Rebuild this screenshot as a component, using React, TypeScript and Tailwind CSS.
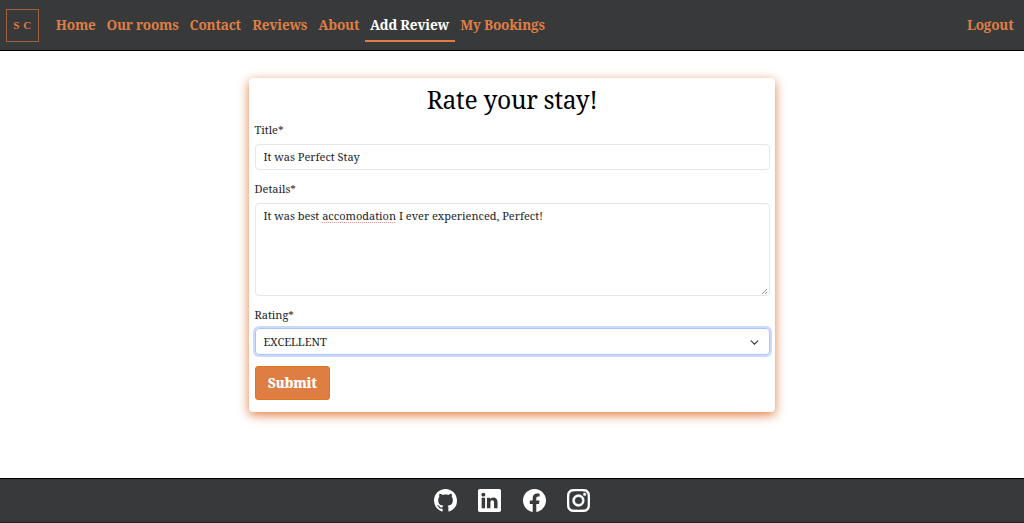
import { BsGithub, BsLinkedin, BsFacebook, BsInstagram } from "react-icons/bs";

const links = [
  { label: "Home", box: "w-[50.5px]" },
  { label: "Our rooms", box: "w-[83px]" },
  { label: "Contact", box: "w-[62.5px]" },
  { label: "Reviews", box: "w-[66.5px]" },
  { label: "About", box: "w-[51.5px]" },
  { label: "Add Review", box: "w-[90px]" },
  { label: "My Bookings", box: "w-[96px]" },
];

export default function App() {
  return (
    <div className="flex h-[523px] flex-col overflow-hidden bg-white font-['Noto_Serif','Droid_Serif','DejaVu_Serif_Condensed','DejaVu_Serif',serif] text-[#212529]">
      <header className="flex h-[51px] shrink-0 items-center border-b border-black bg-[#38393b] pl-[5.5px] pr-[10.5px] text-[13.6px] font-bold tracking-[-0.22px] text-[#df7e43]">
        <div className="flex h-[33px] w-[33px] items-center justify-center border border-[#a15f3a] pl-px pt-px font-['Liberation_Serif',serif] text-[11px] tracking-[0.6px]">
          S C
        </div>
        <nav className="ml-[12px] flex h-full items-center">
          {links.map((l) => (
            <a
              key={l.label}
              className={`flex h-[33px] items-center justify-center whitespace-nowrap border-b-2 pt-[2.5px] ${l.box} ${
                l.label === "Add Review" ? "border-[#df7e43] text-white" : "border-transparent"
              }`}
            >
              {l.label}
            </a>
          ))}
        </nav>
        <a className="ml-auto">Logout</a>
      </header>
      <main className="flex grow justify-center">
        <form className="mt-[27px] flex h-[334px] w-[526px] flex-col rounded-[4px] px-[5.5px] text-[11px] shadow-[0_3px_11px_#df7e43]">
          <h1 className="mt-[5px] h-[34px] text-center text-[24.6px] leading-[34px] tracking-[-0.3px] text-black">Rate your stay!</h1>
          <label className="mt-[4px] h-[17px] leading-[17px]">Title*</label>
          <div className="mt-[6px] flex h-[26px] w-[515px] items-center rounded-[4px] border border-[#e4e6e8] px-2">
            It was Perfect Stay
          </div>
          <label className="mt-[10px] h-[17px] leading-[17px]">Details*</label>
          <div className="mt-[6px] flex h-[93px] w-[515px] justify-between rounded-[4px] border border-[#e4e6e8] pl-2">
            <p className="pt-[3px] leading-[17px]">
              It was best{" "}
              <span className="underline decoration-[#f4a0a0] decoration-dotted decoration-1 underline-offset-2">accomodation</span>{" "}
              I ever experienced, Perfect!
            </p>
            <svg className="self-end" width="7" height="7" viewBox="0 0 7 7" stroke="#777" strokeWidth=".8">
              <path d="M0 6 5 1M3 6 5 4" />
            </svg>
          </div>
          <label className="mt-[10px] h-[17px] leading-[17px]">Rating*</label>
          <div className="mt-[5px] flex h-[27px] w-[515px] items-center justify-between rounded-[4px] border border-[#a9c6f8] pl-2 pr-[10px] pt-px shadow-[0_0_0_2px_#cbdafc]">
            EXCELLENT
            <svg width="9" height="9" viewBox="0 0 16 16" fill="none" stroke="#343a40" strokeWidth="2" strokeLinecap="round">
              <path d="m2 5 6 6 6-6" />
            </svg>
          </div>
          <button className="mt-[11px] h-[34px] w-[75.5px] rounded-[3px] border border-[#df751f] bg-[#df7e43] pt-px text-[13.6px] font-extrabold tracking-[-0.25px] text-white">
            Submit
          </button>
        </form>
      </main>
      <footer className="flex h-[45px] shrink-0 items-center justify-center gap-[21.5px] border-b border-t border-b-[#202123] border-t-black bg-[#38393b] text-white">
        <BsGithub size={23} />
        <BsLinkedin size={23} />
        <BsFacebook size={23} />
        <BsInstagram size={23} stroke="white" strokeWidth={0.3} />
      </footer>
    </div>
  );
}
